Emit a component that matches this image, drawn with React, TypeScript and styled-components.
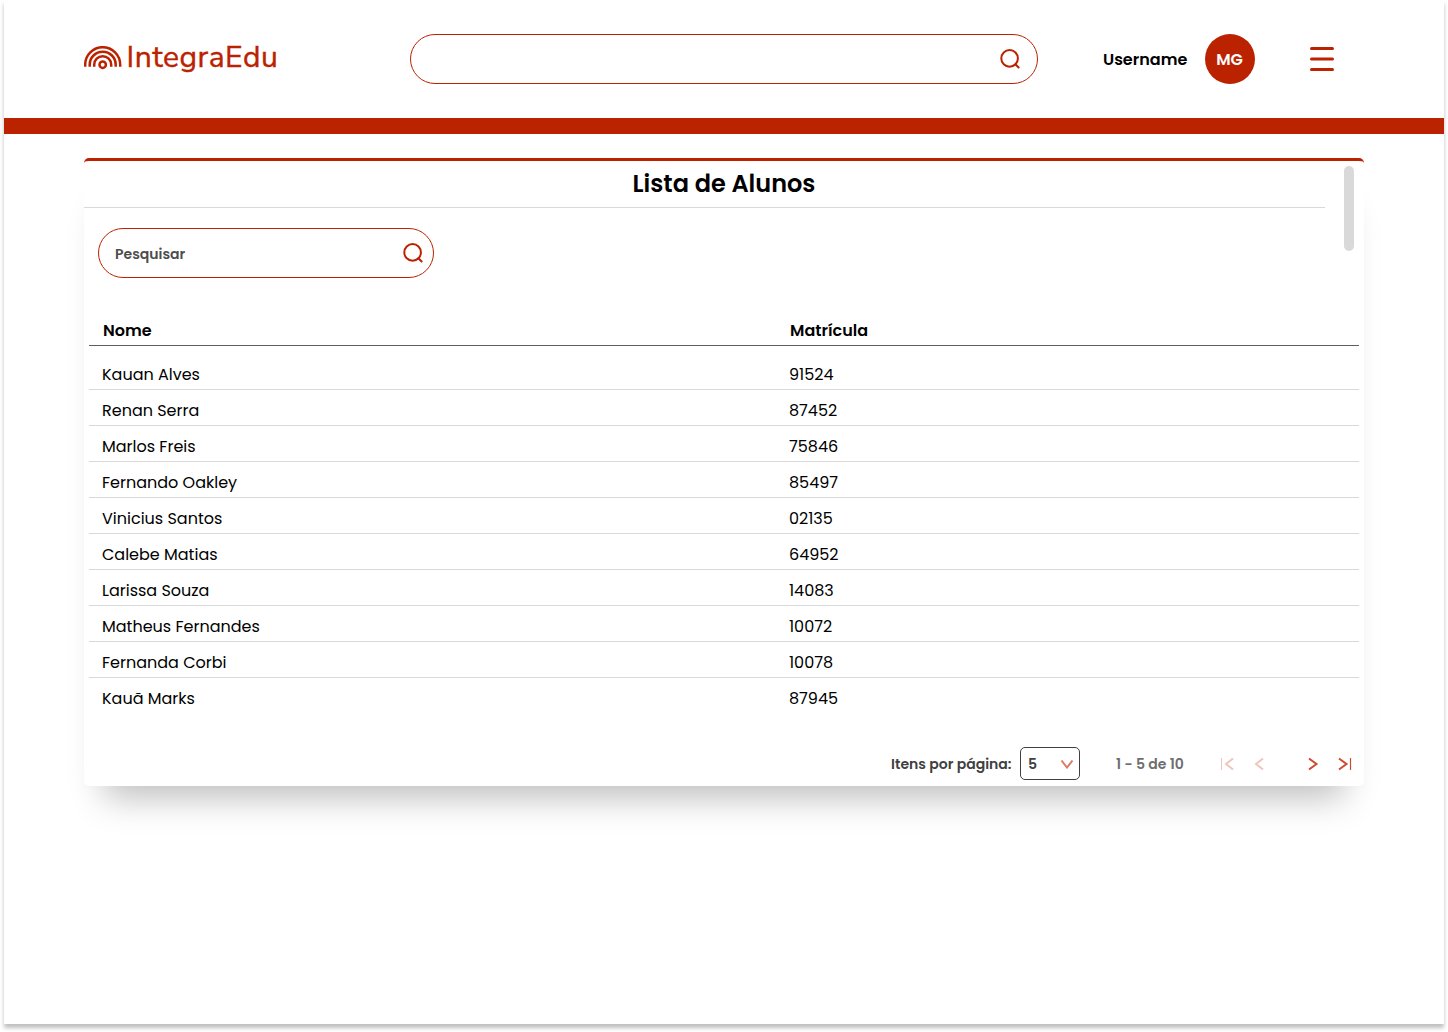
import React from "react";
import styled, { createGlobalStyle } from "styled-components";

const RED = "#bb2200";

const GlobalStyle = createGlobalStyle`
  * { box-sizing: border-box; }
  body { margin: 0; background: #fff; font-family: "Poppins", "Inter", sans-serif; color: #000; }
`;

const Page = styled.div`
  width: 1440px;
  height: 1024px;
  margin: 0 4px 8px;
  background: #fff;
  box-shadow: 0 4px 4px rgba(0, 0, 0, 0.25);
`;

const Header = styled.header`
  display: flex;
  align-items: center;
  height: 134px;
  padding: 0 110px 0 80px;
  border-bottom: 16px solid ${RED};
`;

const Brand = styled.div`
  display: flex;
  align-items: center;
  width: 326px;
  padding-bottom: 2px;
`;

const BrandName = styled.span`
  margin-left: 4.5px;
  font: 400 30px/36px "Nunito Sans", "Lato", sans-serif;
  letter-spacing: 0.5px;
  -webkit-text-stroke: 0.4px ${RED};
  color: ${RED};
`;

const SearchBox = styled.label<{ $width: number; $end: number }>`
  display: flex;
  align-items: center;
  width: ${(p) => p.$width}px;
  height: 50px;
  padding: 0 ${(p) => p.$end}px 0 16px;
  border: 1px solid ${RED};
  border-radius: 25px;
`;

const SearchInput = styled.input`
  flex: 1;
  min-width: 0;
  padding: 2px 0 0;
  border: 0;
  outline: 0;
  background: none;
  font: 600 14px/20px "Poppins", "Inter", sans-serif;
  &::placeholder { color: #4d4d4d; opacity: 1; }
`;

const Text = styled.span`
  white-space: nowrap;
`;

const User = styled.div`
  display: flex;
  align-items: center;
  justify-content: space-between;
  width: 152px;
  margin-left: 65px;
  font-weight: 600;
  font-size: 16px;
`;

const Avatar = styled.div`
  display: grid;
  place-items: center;
  width: 50px;
  height: 50px;
  padding-right: 1px;
  border-radius: 50%;
  background: ${RED};
  color: #fff;
`;

const MenuButton = styled.button`
  display: flex;
  margin-left: auto;
  padding: 0;
  border: 0;
  background: none;
`;

const Card = styled.main`
  position: relative;
  width: 1280px;
  height: 628px;
  margin: 24px auto 0;
  border-top: 3px solid ${RED};
  border-radius: 5px;
  background: #fff;
  box-shadow: 0 32px 32px -20px rgba(0, 0, 0, 0.25);
`;

const ScrollThumb = styled.div`
  position: absolute;
  top: 5px;
  right: 10px;
  width: 10px;
  height: 85px;
  border-radius: 5px;
  background: #d9d9d9;
`;

const Title = styled.h1`
  width: 1241px;
  height: 47px;
  margin: 0;
  padding-left: 39px;
  border-bottom: 1px solid #d9d9d9;
  font-size: 24px;
  line-height: 46px;
  font-weight: 600;
  text-align: center;
`;

const Filter = styled.div`
  padding: 20px 14px 0;
`;

const Table = styled.div`
  margin: 38px 5px 0;
`;

const HeadRow = styled.div`
  display: grid;
  grid-template-columns: 687px 1fr;
  height: 30px;
  margin-bottom: 8px;
  padding-left: 14px;
  border-bottom: 1px solid #5e5e5e;
  font-size: 16px;
  line-height: 30px;
  font-weight: 600;
`;

const Row = styled.div`
  display: grid;
  grid-template-columns: 687px 1fr;
  height: 36px;
  padding-left: 13px;
  border-bottom: 1px solid #d9d9d9;
  font-size: 16px;
  line-height: 42px;
  &:last-child { border-bottom: 0; }
`;

const Footer = styled.footer`
  display: flex;
  align-items: center;
  justify-content: flex-end;
  height: 33px;
  margin-top: 33px;
  padding-right: 12px;
  font-size: 14px;
  font-weight: 600;
  color: #404040;
`;

const FooterText = styled(Text)`
  padding-top: 2px;
`;

const Select = styled.div`
  display: flex;
  align-items: center;
  justify-content: space-between;
  width: 60px;
  height: 33px;
  margin-left: 8.5px;
  padding: 0 5px 0 7px;
  border: 1px solid #404040;
  border-radius: 5px;
`;

const Range = styled.div`
  display: flex;
  width: 68px;
  margin: 0 36px;
  color: #6e6e6e;
`;

const SearchIcon = () => (
  <svg width="20" height="20" viewBox="0 0 20 20" fill="none" stroke={RED} strokeWidth="2">
    <circle cx="9.6" cy="9.4" r="8.3" />
    <path d="M15.4 15.2l3.2 3.3" strokeLinecap="round" />
  </svg>
);

const Logo = () => (
  <svg width="38" height="24" viewBox="0 0 38 24" fill="none" stroke={RED} strokeWidth="2.5">
    <path d="M1.2 20.7v-2a17.5 17.5 0 0 1 35 0v2M5.7 20.7v-2a13 13 0 0 1 26 0v2M10.2 20.7v-2a8.5 8.5 0 0 1 17 0v2" />
    <circle cx="18.7" cy="18.7" r="3.2" />
  </svg>
);

const PagerIcons = () => (
  <svg width="132" height="14" viewBox="0 0 132 14" fill="none" stroke="#cf4a30" strokeWidth="2">
    <g stroke="#f1c4bc">
      <path d="M1.5 1v12" strokeWidth="1" />
      <path d="M13 1.5L6 7l7 5.5M43 1.5L36 7l7 5.5" />
    </g>
    <path d="M89 1.5L96.5 7L89 12.5M119 1.5L126.5 7l-7.5 5.5" />
    <path d="M130.5 1v12" strokeWidth="1.2" />
  </svg>
);

const students: [string, string][] = [
  ["Kauan Alves", "91524"],
  ["Renan Serra", "87452"],
  ["Marlos Freis", "75846"],
  ["Fernando Oakley", "85497"],
  ["Vinicius Santos", "02135"],
  ["Calebe Matias", "64952"],
  ["Larissa Souza", "14083"],
  ["Matheus Fernandes", "10072"],
  ["Fernanda Corbi", "10078"],
  ["Kauã Marks", "87945"],
];

export default function App() {
  return (
    <Page>
      <GlobalStyle />
      <Header>
        <Brand><Logo /><BrandName>IntegraEdu</BrandName></Brand>
        <SearchBox $width={628} $end={17}><SearchInput /><SearchIcon /></SearchBox>
        <User><Text>Username</Text><Avatar><Text>MG</Text></Avatar></User>
        <MenuButton>
          <svg width="24" height="24" viewBox="0 0 24 24" stroke={RED} strokeWidth="3" strokeLinecap="round">
            <path d="M1.5 1.5h21M1.5 12h21M1.5 22.5h21" />
          </svg>
        </MenuButton>
      </Header>
      <Card>
        <ScrollThumb />
        <Title><Text>Lista de Alunos</Text></Title>
        <Filter>
          <SearchBox $width={336} $end={10}><SearchInput placeholder="Pesquisar" /><SearchIcon /></SearchBox>
        </Filter>
        <Table>
          <HeadRow><Text>Nome</Text><Text>Matrícula</Text></HeadRow>
          {students.map(([name, id]) => (
            <Row key={name}><Text>{name}</Text><Text>{id}</Text></Row>
          ))}
        </Table>
        <Footer>
          <FooterText>Itens por página:</FooterText>
          <Select>
            <FooterText>5</FooterText>
            <svg width="14" height="10" viewBox="0 0 14 10" fill="none" stroke="#dd7a69" strokeWidth="2">
              <path d="M1.5 1.5L7 8.5l5.5-7" />
            </svg>
          </Select>
          <Range><FooterText>1 - 5 de 10</FooterText></Range>
          <PagerIcons />
        </Footer>
      </Card>
    </Page>
  );
}
